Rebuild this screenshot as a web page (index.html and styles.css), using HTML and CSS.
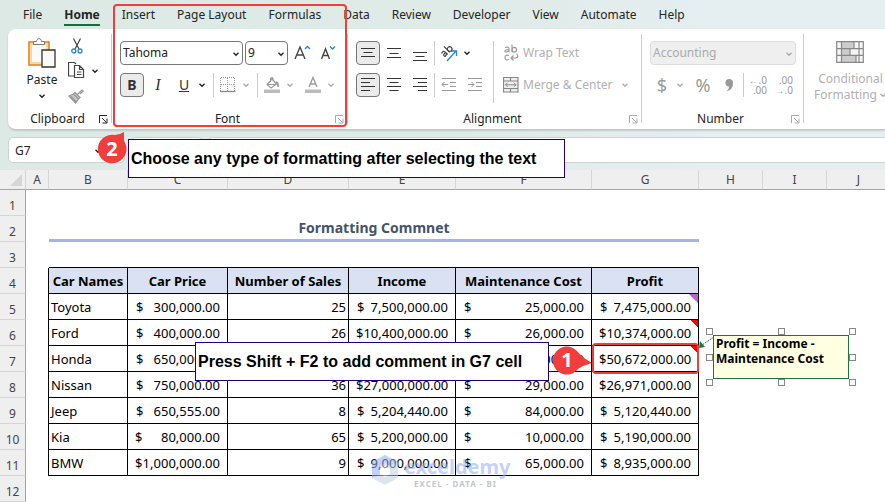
FILE: index.html
```html
<!DOCTYPE html>
<html lang="en">
<head>
<meta charset="utf-8">
<title>Formatting comment - Excel</title>
<link rel="stylesheet" href="styles.css">
</head>
<body>
<svg class="defs" aria-hidden="true">
  <symbol id="chev" viewBox="0 0 8 8"><path d="M1.5 2.8 4 5.2 6.500 2.800" fill="none" stroke="currentColor" stroke-width="1.4"/></symbol>
  <symbol id="launch" viewBox="0 0 9 9"><path d="M.5 8V.5H8M3 3l4.500 4.500M8 3.500V8H3.500" fill="none" stroke="currentColor"/></symbol>
</svg>
<div class="app">
  <header class="chrome">
    <nav class="tabs">
      <a href="#">File</a><a href="#" class="active">Home</a><a href="#">Insert</a><a href="#">Page Layout</a><a href="#">Formulas</a><a href="#">Data</a><a href="#">Review</a><a href="#">Developer</a><a href="#">View</a><a href="#">Automate</a><a href="#">Help</a>
    </nav>

    <div class="ribbon">
      <section class="group clipboard">
        <div class="body">
          <button class="paste">
            <svg width="28" height="30" viewBox="0 0 28 30"><path d="M1 4h20v23H1z" fill="#fafafa" stroke="#e07c13" stroke-width="1.500"/><path d="M3 6h16v19H3z" fill="none" stroke="#fcd99a" stroke-width="2"/><path d="M5.500 6.500V3.500h3C8.500-.3 13.500-.3 13.500 3.500h3v3z" fill="#fff" stroke="#777"/><path d="M14 12h13v17H14z" fill="#fafafa" stroke="#333" stroke-width="1.300"/></svg>
            <span>Paste</span>
            <svg class="chev"><use href="#chev"/></svg>
          </button>
          <div class="clip-tools">
            <button aria-label="Cut"><svg width="12" height="16" viewBox="0 0 12 16"><path d="M2.500.5 8 11M9.500.5 4 11" fill="none" stroke="#444" stroke-width="1.200"/><circle cx="2.800" cy="13" r="2" fill="none" stroke="#2a86d1" stroke-width="1.300"/><circle cx="9" cy="13" r="2" fill="none" stroke="#2a86d1" stroke-width="1.300"/></svg></button>
            <button aria-label="Copy" class="with-chev"><svg width="17" height="17" viewBox="0 0 17 17"><path d="M6 14H.5V.5h6L8 2" fill="none" stroke="#444" stroke-width="1.200"/><path d="M6.500 3.500h5l4 4v8h-9zM11.500 3.500v4h4M9 10h4.500M9 12.500h4.500" fill="none" stroke="#444" stroke-width="1.200"/></svg><svg class="chev"><use href="#chev"/></svg></button>
            <button aria-label="Format Painter"><svg width="17" height="16" viewBox="0 0 17 16"><path d="M14.500 1.500 9.500 6.500M7 4.500l5 5-1.500 1.500-5-5zM5.500 6 1 8l6.500 7 3-4" fill="#c9c9c9" stroke="#999" stroke-width="1.300"/><path d="m3 8.500 5 5.500M12 6l3.500-3.500" stroke="#999" stroke-width="1.500"/></svg></button>
          </div>
        </div>
        <footer><span>Clipboard</span><svg class="launch"><use href="#launch"/></svg></footer>
      </section>

      <section class="group font">
        <div class="body rows">
          <div class="row">
            <label class="combo font-name"><select aria-label="Font"><option>Tahoma</option></select><svg class="chev"><use href="#chev"/></svg></label>
            <label class="combo font-size"><select aria-label="Font size"><option>9</option></select><svg class="chev"><use href="#chev"/></svg></label>
            <button class="tool" aria-label="Increase font size"><svg width="18" height="18" viewBox="0 0 18 18"><path d="M2 15 7 3l5 12M3.800 11h6.400" fill="none" stroke="#444" stroke-width="1.400"/><path d="m12 5 2.500-2.500L17 5" fill="none" stroke="#2a86d1" stroke-width="1.400"/></svg></button>
            <button class="tool" aria-label="Decrease font size"><svg width="18" height="18" viewBox="0 0 18 18"><path d="M2.500 15 6.500 5l4 10M4 11.500h5" fill="none" stroke="#444" stroke-width="1.400"/><path d="M11 2.500 13.500 5 16 2.500" fill="none" stroke="#2a86d1" stroke-width="1.400"/></svg></button>
          </div>
          <div class="row">
            <button class="tool on"><b>B</b></button>
            <button class="tool serif"><i>I</i></button>
            <button class="tool"><u>U</u></button>
            <svg class="chev"><use href="#chev"/></svg>
            <hr class="sep">
            <button class="tool" aria-label="Borders"><svg width="16" height="16" viewBox="0 0 16 16"><path d="M.5 14V.5h14V14M7.500 1v13M1 7.500h13" fill="none" stroke="#999" stroke-dasharray="1 1"/><path d="M0 14.500h15.500" stroke="#888" stroke-width="1.300"/></svg></button>
            <svg class="chev off"><use href="#chev"/></svg>
            <hr class="sep">
            <button class="tool" aria-label="Fill color"><svg width="16" height="18" viewBox="0 0 16 18"><path d="M3 8.500 8 3l4.500 5L7 12zM6.500 6V2.500q1.500-2 2.500 0V5M3 8.500h9.500" fill="none" stroke="#999" stroke-width="1.200"/><path d="M12 6q2.500.5 2 5" fill="none" stroke="#999" stroke-width="1.700"/><path d="M0 13.500h16V17H0z" fill="#bbb"/></svg></button>
            <svg class="chev off"><use href="#chev"/></svg>
            <button class="tool font-color" aria-label="Font color"><svg width="16" height="18" viewBox="0 0 16 18"><path d="M4 11 8 1.500 12 11M5.300 8h5.400" fill="none" stroke="#999" stroke-width="1.300"/><path d="M0 13.500h16V17H0z" fill="#bbb"/></svg></button>
            <svg class="chev off"><use href="#chev"/></svg>
          </div>
        </div>
        <footer><span>Font</span><svg class="launch off"><use href="#launch"/></svg></footer>
      </section>

      <section class="group alignment">
        <div class="body">
          <div class="rows">
            <div class="row">
              <button class="tool on" aria-label="Top align"><svg width="16" height="16" viewBox="0 0 16 16"><path d="M1 3.500h14M3.500 7.500h9M1 11.500h14" stroke="#333"/></svg></button>
              <button class="tool" aria-label="Middle align"><svg width="16" height="16" viewBox="0 0 16 16"><path d="M1 3.500h14M3.500 8.500h9M1 12.500h14" stroke="#333"/></svg></button>
              <button class="tool" aria-label="Bottom align"><svg width="16" height="16" viewBox="0 0 16 16"><path d="M1 7.500h14M3.500 11.500h9M1 15.500h14" stroke="#333"/></svg></button>
              <hr class="sep even">
              <button class="tool" aria-label="Orientation"><svg width="18" height="18" viewBox="0 0 18 18"><path d="m7 17 9-10M11 7H16.500V12" fill="none" stroke="#2a86d1" stroke-width="1.300"/><g transform="rotate(-45 7 7)" fill="none" stroke="#444" stroke-width="1.200"><path d="M1.500 5Q5 3.500 5 6.500V10M5 7Q1.500 6.500 1.500 8.500T5 8.500M8 1.500V10"/><circle cx="10.300" cy="7.500" r="2.300"/></g></svg></button>
              <svg class="chev"><use href="#chev"/></svg>
            </div>
            <div class="row">
              <button class="tool on" aria-label="Align left"><svg width="16" height="16" viewBox="0 0 16 16"><path d="M1 1.500h14M1 5.500h9M1 9.500h14M1 13.500h9" stroke="#333"/></svg></button>
              <button class="tool" aria-label="Center"><svg width="16" height="16" viewBox="0 0 16 16"><path d="M1 1.500h14M3.500 5.500h9M1 9.500h14M3.500 13.500h9" stroke="#333"/></svg></button>
              <button class="tool" aria-label="Align right"><svg width="16" height="16" viewBox="0 0 16 16"><path d="M1 1.500h14M6 5.500h9M1 9.500h14M6 13.500h9" stroke="#333"/></svg></button>
              <hr class="sep even">
              <button class="tool" aria-label="Decrease indent"><svg width="16" height="16" viewBox="0 0 16 16"><path d="M1 1.500h14M9 5.500h6M9 9.500h6M1 13.500h14M7 7.500H1M3.500 5 1 7.500 3.500 10" fill="none" stroke="#999"/></svg></button>
              <button class="tool" aria-label="Increase indent"><svg width="16" height="16" viewBox="0 0 16 16"><path d="M1 1.500h14M9 5.500h6M9 9.500h6M1 13.500h14M1 7.500h6M4.500 5 7 7.500 4.500 10" fill="none" stroke="#999"/></svg></button>
            </div>
          </div>
          <hr class="sep tall">
          <div class="rows">
            <button class="row text-tool"><svg width="16" height="18" viewBox="0 0 16 18"><g fill="none" stroke="#999" stroke-width="1.200"><path d="M2 3.500Q6 2.200 6 5v3.200M6 5.500Q2 5.500 2 7.200T6 7M9 .5v7.700"/><ellipse cx="11.300" cy="5.800" rx="2.200" ry="2.400"/><path d="M6 11.500q-4-1.500-4 2t4 2M13.500 9.500q3 4-1 4.500H8M10.500 11.500 8 14l2.500 2.500"/></g></svg>Wrap Text</button>
            <button class="row text-tool merge"><svg width="16" height="16" viewBox="0 0 16 16"><path d="M.5.500h14.500v14.500H.5zM.5 4h14.500M.5 11.500h14.500M7.500.5V4M7.500 11.500V15" fill="#eee" stroke="#888" stroke-width="1.200"/><path d="M2.500 7.800h10.500M4.500 5.800l-2 2 2 2M11 5.800l2 2-2 2" fill="none" stroke="#888"/></svg><span>Merge &amp; Center</span><svg class="chev"><use href="#chev"/></svg></button>
          </div>
        </div>
        <footer><span>Alignment</span><svg class="launch off"><use href="#launch"/></svg></footer>
      </section>

      <section class="group number">
        <div class="body rows">
          <label class="combo number-format"><select aria-label="Number format" disabled><option>Accounting</option></select><svg class="chev"><use href="#chev"/></svg></label>
          <div class="row">
            <button class="tool glyph">$</button>
            <svg class="chev off"><use href="#chev"/></svg>
            <button class="tool glyph percent">%</button>
            <button class="tool" aria-label="Comma style"><svg width="10" height="16" viewBox="0 0 10 16"><path d="M1.500 14.500Q5 13 5 9.500A3.800 3.800 0 1 1 9 5.500Q9.500 13 1.500 14.500z" fill="#999"/></svg></button>
            <hr class="sep even">
            <button class="tool decimals"><span>←.0</span><span>.00</span></button>
            <button class="tool decimals"><span>.00</span><span>→.0</span></button>
          </div>
        </div>
        <footer><span>Number</span><svg class="launch off"><use href="#launch"/></svg></footer>
      </section>

      <section class="group styles">
        <button class="conditional">
          <svg width="28" height="22" viewBox="0 0 28 22"><path d="M1 1h26v20H1z" fill="#f5f5f5"/><path d="M5 1h13v7H5zM5 8h9v6H5zM5 14h15v7H5z" fill="#ccc"/><path d="M.7.700h26.600v20.600H.7zM1 7.700h26M1 14.300h26M5.500 1v20M18 1v6.700M14 7.700v6.600M20 14.300V21M23 1v20" fill="none" stroke="#888" stroke-width="1.200"/></svg>
          <span>Conditional</span>
          <span class="second">Formatting<svg class="chev"><use href="#chev"/></svg></span>
        </button>
      </section>
    </div>

    <div class="formula-bar">
      <label class="name-box"><input type="text" value="G7" aria-label="Name box"><svg class="chev"><use href="#chev"/></svg></label>
      <div class="fx"></div>
      <input class="formula" type="text" aria-label="Formula">
    </div>
  </header>

  <main class="sheet">
    <table>
      <colgroup><col class="c-num"><col class="c-a"><col class="c-b"><col class="c-c"><col class="c-d"><col class="c-e"><col class="c-f"><col class="c-g"><col class="c-h"><col class="c-h"><col class="c-h"></colgroup>
      <thead>
        <tr><th class="corner"><svg width="12" height="12" viewBox="0 0 12 12"><path d="M12 0v12H0z" fill="#d5d5d5"/></svg></th><th>A</th><th>B</th><th>C</th><th>D</th><th>E</th><th>F</th><th>G</th><th>H</th><th>I</th><th>J</th></tr>
      </thead>
      <tbody>
        <tr><th>1</th><td colspan="10"></td></tr>
        <tr><th>2</th><td></td><td colspan="6" class="title">Formatting Commnet</td><td colspan="3"></td></tr>
        <tr><th>3</th><td></td><td colspan="6" class="edge"></td><td colspan="3"></td></tr>
        <tr class="data head"><th>4</th><td></td><td>Car Names</td><td>Car Price</td><td>Number of Sales</td><td>Income</td><td>Maintenance Cost</td><td>Profit</td></tr>
        <tr class="data"><th>5</th><td></td><td>Toyota</td><td><div class="acc"><span>$</span>300,000.00</div></td><td class="n">25</td><td><div class="acc"><span>$</span>7,500,000.00</div></td><td><div class="acc"><span>$</span>25,000.00</div></td><td class="threaded"><div class="acc"><span>$</span>7,475,000.00</div></td></tr>
        <tr class="data"><th>6</th><td></td><td>Ford</td><td><div class="acc"><span>$</span>400,000.00</div></td><td class="n">26</td><td><div class="acc long"><span>$</span>10,400,000.00</div></td><td><div class="acc"><span>$</span>26,000.00</div></td><td class="noted"><div class="acc long"><span>$</span>10,374,000.00</div></td></tr>
        <tr class="data"><th>7</th><td></td><td>Honda</td><td><div class="acc"><span>$</span>650,000.00</div></td><td class="n"></td><td></td><td><div class="acc"><span>$</span>28,000.00</div></td><td class="noted"><div class="acc long"><span>$</span>50,672,000.00</div></td></tr>
        <tr class="data"><th>8</th><td></td><td>Nissan</td><td><div class="acc"><span>$</span>750,000.00</div></td><td class="n">36</td><td><div class="acc long"><span>$</span>27,000,000.00</div></td><td><div class="acc"><span>$</span>29,000.00</div></td><td><div class="acc long"><span>$</span>26,971,000.00</div></td></tr>
        <tr class="data"><th>9</th><td></td><td>Jeep</td><td><div class="acc"><span>$</span>650,555.00</div></td><td class="n">8</td><td><div class="acc"><span>$</span>5,204,440.00</div></td><td><div class="acc"><span>$</span>84,000.00</div></td><td><div class="acc"><span>$</span>5,120,440.00</div></td></tr>
        <tr class="data"><th>10</th><td></td><td>Kia</td><td><div class="acc long"><span>$</span>80,000.00</div></td><td class="n">65</td><td><div class="acc"><span>$</span>5,200,000.00</div></td><td><div class="acc"><span>$</span>10,000.00</div></td><td><div class="acc"><span>$</span>5,190,000.00</div></td></tr>
        <tr class="data"><th>11</th><td></td><td>BMW</td><td><div class="acc long"><span>$</span>1,000,000.00</div></td><td class="n">9</td><td><div class="acc"><span>$</span>9,000,000.00</div></td><td><div class="acc"><span>$</span>65,000.00</div></td><td><div class="acc"><span>$</span>8,935,000.00</div></td></tr>
        <tr><th>12</th><td colspan="10"></td></tr>
      </tbody>
    </table>
  </main>

  <div class="watermark">
    <svg width="28" height="32" viewBox="0 0 28 32"><path d="M14 1 27 8v16l-13 7L1 24V8z" fill="#c3d2e2"/><path d="M14 1 1 8v16l8-4V12l5-3 5 3 8-4z" fill="#93aef3"/><path d="m14 12 5 3v5l-5 3-5-3v-5z" fill="#fff"/></svg>
    <div><strong>exceldemy</strong><small>EXCEL - DATA - BI</small></div>
  </div>

  <div class="frame font-frame"></div>
  <div class="frame cell-frame"></div>
  <div class="callout choose">Choose any type of formatting after selecting the text</div>
  <div class="callout press">Press Shift + F2 to add comment in G7 cell</div>
  <div class="pin two"><svg width="30" height="34" viewBox="0 0 30 34"><path d="M27 2v9A14.300 14.300 0 1 1 18 5Q23 4.500 27 2z" fill="#f23d3d"/></svg><span>2</span></div>
  <div class="pin one"><svg width="40" height="30" viewBox="0 0 40 30"><path d="M40 17Q32 19 26 23A14 14 0 1 1 25 5q6 7 15 12z" fill="#f23d3d"/></svg><span>1</span></div>

  <svg class="arrow" width="16" height="14" viewBox="0 0 16 14"><path d="M16 1 4 9" stroke="#217346" stroke-dasharray="2 1"/><path d="M1 12 2 5l5 6z" fill="#217346"/></svg>
  <div class="note">Profit = Income - Maintenance Cost
    <i class="h tl"></i><i class="h tc"></i><i class="h tr"></i><i class="h ml"></i><i class="h mr"></i><i class="h bl"></i><i class="h bc"></i><i class="h br"></i>
  </div>
</div>
</body>
</html>
```
FILE: styles.css
```css
* { box-sizing: border-box; }
body { margin: 0; background: #fff; color: #222; font: 12px/16px "Noto Sans", "Open Sans", sans-serif; overflow: hidden; }
button, input, select { margin: 0; padding: 0; border: 0; background: none; color: inherit; font: inherit; }
svg { flex: none; display: block; }
.defs { position: absolute; width: 0; height: 0; }
.app { position: relative; overflow: hidden; }

.chrome { height: 170px; background: linear-gradient(90deg, #dce9e4 0%, #deebe6 50%, #e5eef0 80%); }
.tabs { display: flex; gap: 22px; height: 29px; padding: 5px 0 0 23px; }
.tabs a { height: 21px; color: #252525; text-decoration: none; line-height: 20px; white-space: nowrap; }
.tabs .active { font-weight: bold; border-bottom: 2px solid #0e703a; }

.ribbon { display: flex; height: 101px; margin-left: 8px; padding-top: 5px; background: #fff; border-bottom: 1px solid #bfc8c5; border-radius: 8px 0 0 8px; box-shadow: 0 1px 2px #0002; }
.group { display: flex; flex-direction: column; flex: none; height: 89px; padding: 7px 0 0 8px; border-right: 1px solid #ccc; }
.body { display: flex; flex: 1; }
.rows { display: flex; flex-direction: column; gap: 8px; }
.row { display: flex; align-items: center; gap: 2px; height: 24px; }
.group footer { display: flex; align-items: center; margin: 0 0 -4px -8px; padding-right: 3px; }
.group footer span { flex: 1; padding-left: 8px; text-align: center; }
.launch { width: 9px; height: 9px; }
.off { color: #aaa; }
.chev { width: 8px; height: 8px; }

.row > .chev { width: 12px; margin-left: -2px; }
.tool { display: flex; align-items: center; justify-content: center; flex: none; width: 24px; height: 24px; color: #333; font-size: 14px; }
.on { background: #ebebeb; border: 1px solid #777; border-radius: 4px; }
.serif { font-family: "Liberation Serif", serif; font-size: 16px; }
.sep { flex: none; width: 1px; height: 24px; margin: 0 0 0 3px; border: 0; background: #ccc; }
.sep.even { margin: 0; }
.sep.tall { height: 62px; margin: 0 9px 0 20px; }
.font-color { margin-left: 3px; }

.clipboard { width: 104px; }
.paste { display: flex; flex-direction: column; align-items: center; width: 52px; height: 64px; margin-top: -3px; }
.paste span { margin: 4px 0; }
.clip-tools { display: flex; flex-direction: column; gap: 8px; margin-top: -4px; }
.clip-tools button { display: flex; align-items: center; justify-content: center; width: 17px; height: 17px; }
.clip-tools .with-chev { justify-content: start; gap: 6px; width: 31px; }

.font { width: 236px; }
.alignment { width: 294px; }
.alignment .sep.tall { margin-left: 20px; }
.alignment .rows:first-child { width: 117px; }
.combo { position: relative; display: block; height: 24px; border: 1px solid #777; border-radius: 4px; }
.combo select { width: 100%; height: 22px; padding-left: 2px; appearance: none; opacity: 1; }
.combo .chev { position: absolute; right: 2px; top: 8px; }
.font-name { width: 123px; }
.font-size { width: 43px; }
.number-format { width: 146px; border-color: #ddd; background: #efefef; color: #aaa; }

.text-tool { gap: 4px; color: #b0b0b0; white-space: nowrap; }
.merge span { width: 94px; text-align: left; }
.number { width: 162px; }
.glyph { color: #999; font-size: 18px; }
.percent { margin-left: 3px; }
.decimals { flex-direction: column; align-items: flex-end; padding-right: 3px; color: #999; font-size: 10px; line-height: 10px; }
.styles { border: 0; padding-left: 10px; }
.conditional { display: flex; flex-direction: column; align-items: center; color: #b0b0b0; }
.conditional span { margin-top: 8px; }
.conditional .second { display: flex; align-items: center; gap: 2px; margin-top: 0; }

.formula-bar { display: flex; padding: 7px 0 0 8px; }
.name-box, .fx, .formula { height: 26px; background: #fff; border: 1px solid #ccd2d0; border-radius: 5px; }
.name-box { position: relative; width: 117px; margin-right: 6px; }
.name-box input { width: 70px; height: 24px; padding-left: 6px; }
.name-box .chev { position: absolute; left: 85px; top: 9px; }
.fx { width: 72px; margin-right: 5px; }
.formula { flex: 1; border-right: 0; border-radius: 5px 0 0 5px; }

.sheet { overflow: hidden; }
table { width: 891px; border-spacing: 0; table-layout: fixed; color: #000; font-size: 13px; line-height: 18px; }
.c-num { width: 26px; } .c-a { width: 23px; } .c-b { width: 79px; } .c-c { width: 100px; } .c-d { width: 121px; } .c-e { width: 107px; } .c-f { width: 136px; } .c-g { width: 107px; } .c-h { width: 64px; }
th, td { padding: 0; height: 26px; }
th { background: #efefef; color: #444; font-weight: normal; font-size: 12px; border-right: 1px solid #d5d5d5; border-bottom: 1px solid #d5d5d5; }
thead th { height: 20px; border-bottom-color: #a5a5a5; }
.corner svg { margin-left: 10px; }
tbody th { padding-top: 7px; border-right-color: #a5a5a5; }
.title { color: #44546a; font-size: 14px; font-weight: bold; text-align: center; border-bottom: 3px solid #a2b6e0; }
.edge { border-bottom: 1px solid #000; }
.data td { border-right: 1px solid #000; border-bottom: 1px solid #000; padding-left: 2px; white-space: nowrap; }
.data td:nth-child(2) { border-bottom: 0; }
.head td { font-weight: bold; text-align: center; padding: 0; }
.head td:nth-child(n+3) { background: #d9e1f2; }
.n { text-align: right; padding-right: 2px; }
.acc { display: flex; justify-content: space-between; padding: 0 7px 0 6px; }
.acc.long { padding-left: 5px; }
.threaded { background: linear-gradient(225deg, #b868c8 6px, transparent 7px); }
.noted { background: linear-gradient(225deg, #f00 5px, transparent 5px); }

.watermark { position: absolute; left: 371px; top: 454px; display: flex; gap: 5px; opacity: .55; }
.watermark strong { display: block; color: #93aef3; font: bold 20px/26px "Noto Sans", sans-serif; }
.watermark small { display: block; padding-left: 10px; color: #8d99a6; font: bold 8px/8px "Noto Sans", sans-serif; letter-spacing: 1px; }

.frame { position: absolute; border: 2px solid #f23d3d; border-radius: 4px; }
.font-frame { left: 113px; top: 4px; width: 234px; height: 123px; }
.cell-frame { left: 592px; top: 343px; width: 107px; height: 31px; }
.callout { position: absolute; display: flex; align-items: center; height: 39px; padding-left: 2px; background: #fff; border: 1px solid #20007a; color: #000; font: bold 16px "Liberation Sans", sans-serif; white-space: nowrap; }
.choose { left: 128px; top: 139px; width: 437px; }
.press { left: 195px; top: 342px; width: 354px; }
.pin { position: absolute; color: #fff; font: bold 20px/28px "Noto Sans", sans-serif; }
.pin span { position: absolute; left: 1px; width: 28px; text-align: center; }
.two { left: 97px; top: 130px; }
.two span { top: 5px; }
.one { left: 552px; top: 346px; }
.one span { top: 0; }

.arrow { position: absolute; left: 698px; top: 336px; }
.note { position: absolute; left: 713px; top: 335px; width: 136px; height: 44px; padding: 0 2px; background: #ffffe1; border: 1px solid #217346; color: #000; font-size: 12px; font-weight: bold; line-height: 15px; }
.h { position: absolute; width: 7px; height: 7px; background: #fff; border: 1px solid #888; }
.tl, .ml, .bl { left: -8px; }
.tc, .bc { left: 64px; }
.tr, .mr, .br { right: -8px; }
.tl, .tc, .tr { top: -8px; }
.ml, .mr { top: 18px; }
.bl, .bc, .br { bottom: -8px; }
```
